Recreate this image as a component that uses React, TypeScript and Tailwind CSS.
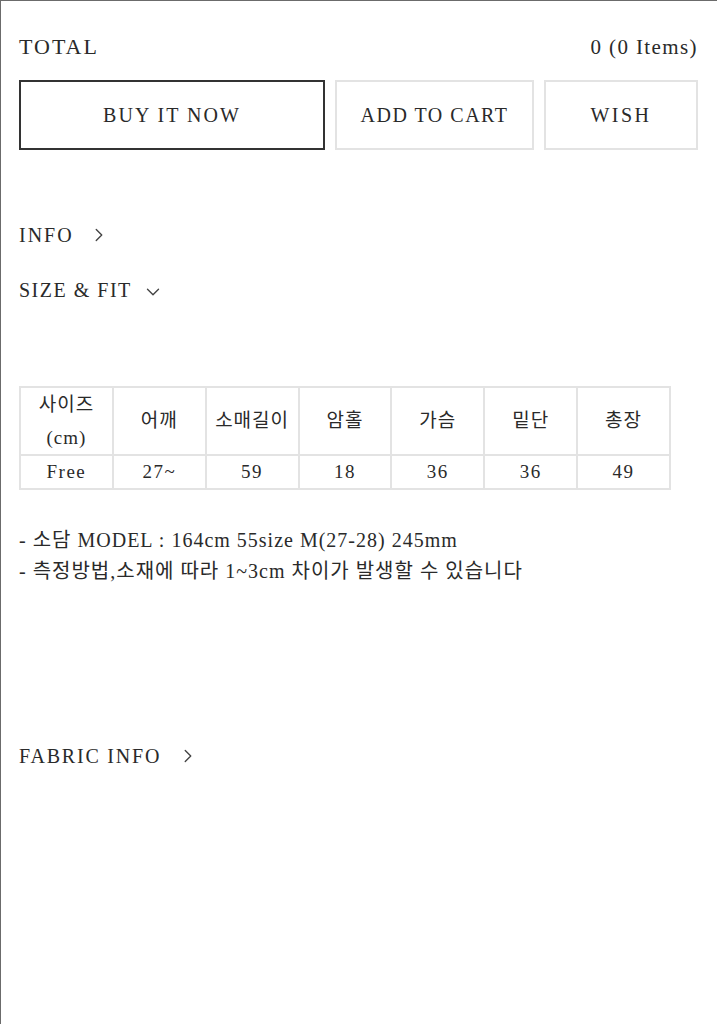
import { ChevronRight, ChevronDown } from 'lucide-react';

const serif = { fontFamily: '"Liberation Serif", "Noto Sans CJK KR", serif' };

const headers = ['어깨', '소매길이', '암홀', '가슴', '밑단', '총장'];
const values = ['27~', '59', '18', '36', '36', '49'];

export default function App() {
  return (
    <div
      className="min-h-screen bg-white border-t border-l border-[#6b6b6b] text-[#2a2a2a] pl-[18px] pr-[19px] pt-[34px]"
      style={serif}
    >
      {/* total */}
      <div className="flex justify-between items-center h-6 leading-6">
        <span className="text-[22px] tracking-[2px]">TOTAL</span>
        <span className="text-[21px] tracking-[1.4px]">0 (0 Items)</span>
      </div>

      {/* buttons */}
      <div className="flex gap-[10px] mt-[21px] h-[70px]">
        <button className="w-[306px] border-2 border-[#333] text-[20px] tracking-[2px]">BUY IT NOW</button>
        <button className="w-[199px] border-2 border-[#e3e3e3] text-[20px] tracking-[1.5px]">ADD TO CART</button>
        <button className="flex-1 border-2 border-[#e3e3e3] text-[20px] tracking-[2.5px]">WISH</button>
      </div>

      {/* sections */}
      <div className="mt-[73px] flex items-center h-6 text-[20px] tracking-[2px]">
        INFO
        <ChevronRight className="w-[22px] h-[22px] ml-[14px] text-[#444]" strokeWidth={1.5} />
      </div>
      <div className="mt-[31px] flex items-center h-6 text-[20px] tracking-[1.5px]">
        SIZE &amp; FIT
        <ChevronDown className="w-[22px] h-[22px] ml-[10px] mt-[3px] text-[#444]" strokeWidth={1.5} />
      </div>

      {/* size table */}
      <table className="mt-[84px] w-[652px] table-fixed border-collapse">
        <thead>
          <tr className="h-[68px]">
            <th className="border-2 border-[#e3e3e3] font-normal text-[19px] tracking-[1px] leading-[33px]">
              <div>사이즈</div>
              <div>(cm)</div>
            </th>
            {headers.map(h => (
              <th key={h} className="border-2 border-[#e3e3e3] font-normal text-[19px] tracking-[1px]">
                {h}
              </th>
            ))}
          </tr>
        </thead>
        <tbody>
          <tr className="h-[34px]">
            <td className="border-2 border-[#e3e3e3] text-center text-[19px] tracking-[1.5px]">Free</td>
            {values.map((v, i) => (
              <td key={i} className="border-2 border-[#e3e3e3] text-center text-[19px] tracking-[1.5px]">
                {v}
              </td>
            ))}
          </tr>
        </tbody>
      </table>

      {/* notes */}
      <div className="mt-[35px] text-[20px] tracking-[1px] leading-[31px]">
        <p>- 소담 MODEL : 164cm 55size M(27-28) 245mm</p>
        <p>- 측정방법,소재에 따라 1~3cm 차이가 발생할 수 있습니다</p>
      </div>

      <div className="mt-[157px] flex items-center h-6 text-[20px] tracking-[1.8px]">
        FABRIC INFO
        <ChevronRight className="w-[22px] h-[22px] ml-[16px] text-[#444]" strokeWidth={1.5} />
      </div>
    </div>
  );
}
